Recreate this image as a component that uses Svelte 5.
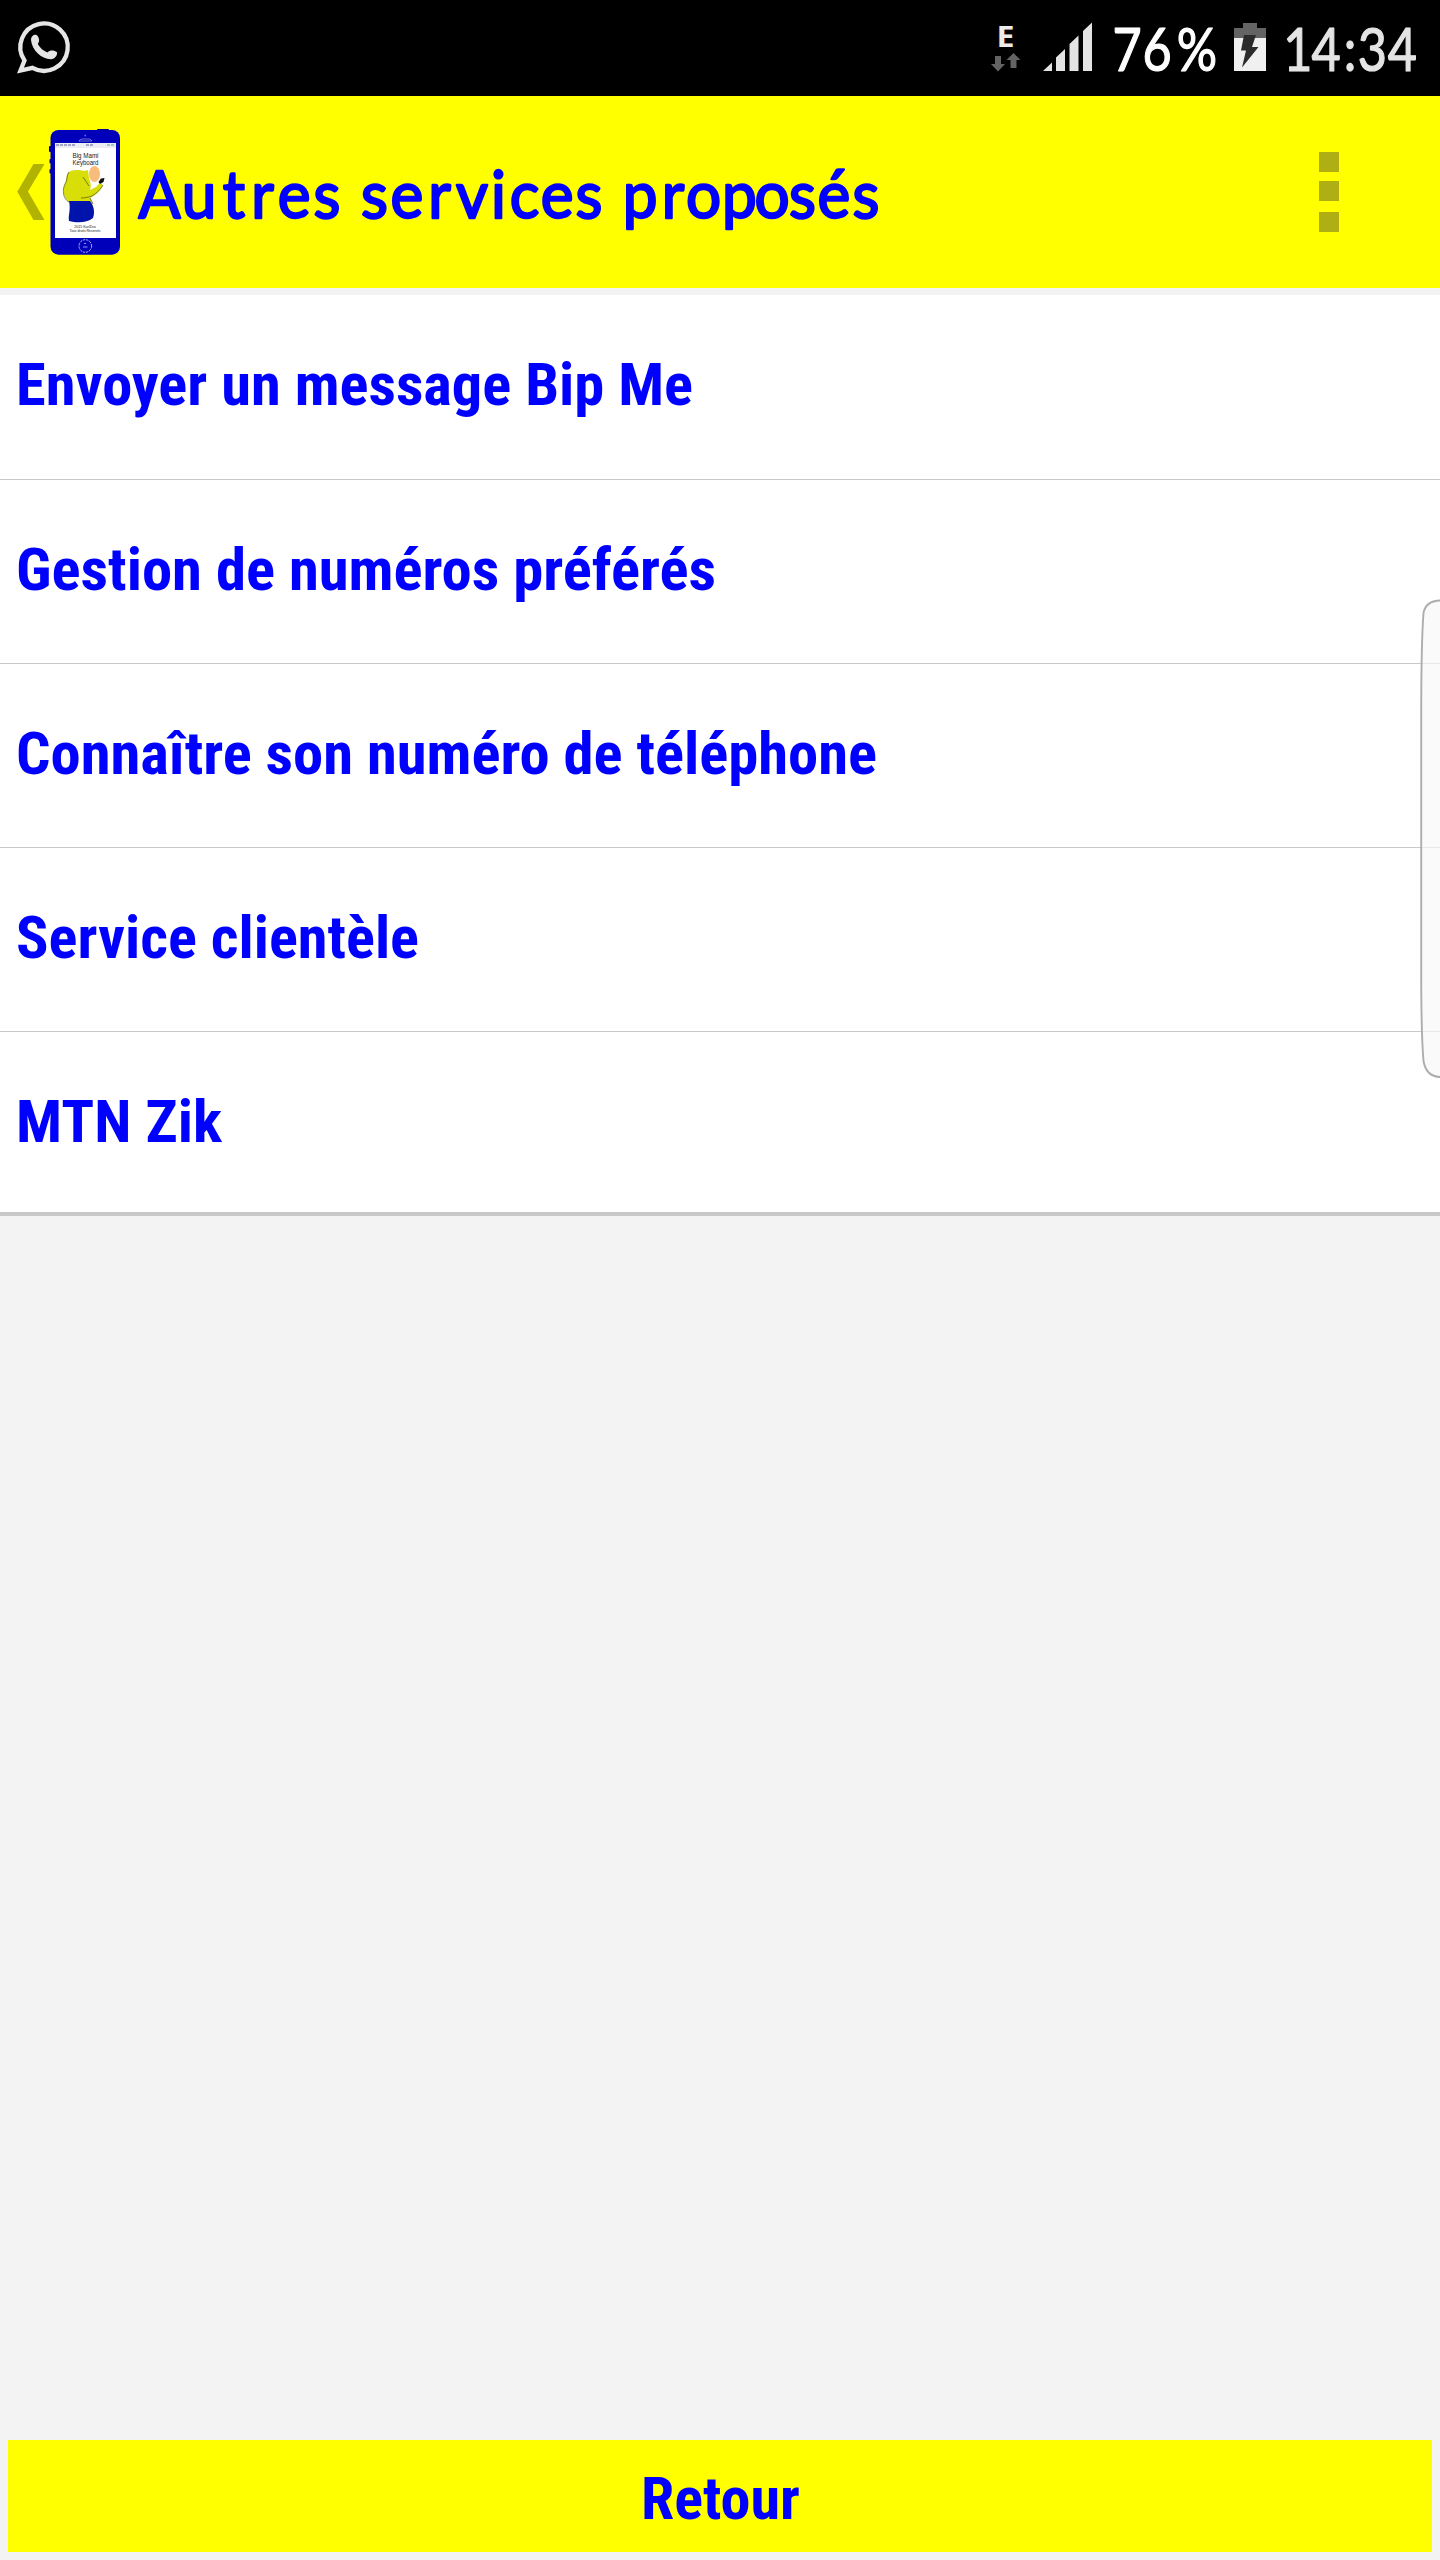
<script lang="ts">
  const services = [
    { label: 'Envoyer un message Bip Me', width: 677 },
    { label: 'Gestion de numéros préférés', width: 700 },
    { label: 'Connaître son numéro de téléphone', width: 861 },
    { label: 'Service clientèle', width: 403 },
    { label: 'MTN Zik', width: 206 },
  ];

  // Letters are centred one by one: the title is loosely spaced
  const title = [
    { word: 'Autres', centers: [159.5, 199, 234, 262.5, 294, 327] },
    { word: 'services', centers: [374.5, 407, 439.5, 472, 498.5, 524.5, 557, 589] },
    { word: 'proposés', centers: [640, 673, 703.5, 739.5, 772, 802.5, 834, 866] },
  ];

  const battery = [1127, 1157, 1197];
  const clock = [1298, 1326, 1350, 1372.5, 1402.5];

  const TITLE_SCALE = 0.94;
  const DIGIT_SCALE = 0.84;

  function place(centers: number[], scale: number) {
    return centers.map((c) => (c / scale).toFixed(1)).join(' ');
  }
</script>

<div class="screen">
  <header class="status-bar">
    <svg width="100" height="96" viewBox="0 0 100 96">
      <path d="M24.500 60.500A23.700 23.700 0 1 1 32.500 67.800L20.500 70.500Z" fill="none" stroke="#e6e6e6" stroke-width="4.300" />
      <path d="M32.500 36C34 34.300 37 34.500 38 36.500C39.500 39.500 39.500 41.500 37.800 44C40 48 43.500 51 47.500 52.500C50 50 54 50 57 52.300C57.500 55.500 55 59 51 59.200C41 59 32 50 31 40C31 38.300 31.500 37 32.500 36Z" fill="#e6e6e6" />
    </svg>
    <div class="status-icons">
      <svg width="48" height="96" viewBox="988 0 48 96">
        <text class="network" x="996.5" y="47" textLength="18" lengthAdjust="spacingAndGlyphs">E</text>
        <path d="M995 56h6v8h4l-7 7.500-7-7.500h4z M1010.500 68h6v-8h4l-7-7-7 7h4z" fill="#636363" />
      </svg>
      <svg width="68" height="96" viewBox="1036 0 68 96">
        <path d="M1043 71L1052 62.500V71Z M1056 71V57.500L1065 49V71Z M1069.500 71V44L1078.500 35.500V71Z M1083 71V31L1092 22.500V71Z" fill="#e4e4e4" />
      </svg>
      <svg width="122" height="96" viewBox="1104 0 122 96">
        <text class="digits bright" transform="scale({DIGIT_SCALE} 1)" x={place(battery, DIGIT_SCALE)} y="71">76%</text>
      </svg>
      <svg width="54" height="96" viewBox="1226 0 54 96">
        <path d="M1243 23h14v5h9v10h-32V28h9z" fill="#646464" />
        <path d="M1234 38h32v33h-32z" fill="#f0f0f0" />
        <path d="M1244 35h12l-4 12h6.500L1242 67.500l4-17h-5z" fill="#2b2b2b" />
      </svg>
      <svg width="160" height="96" viewBox="1280 0 160 96">
        <text class="digits" transform="scale({DIGIT_SCALE} 1)" x={place(clock, DIGIT_SCALE)} y="71">14:34</text>
      </svg>
    </div>
  </header>

  <nav class="action-bar">
    <svg width="130" height="192" viewBox="0 96 130 192">
      <path d="M33.500 164H44.500L28 191.500L44.500 220H33.500L17.300 191.700Z" fill="#b2b200" />
      <rect x="49" y="146" width="4" height="6" rx="1" fill="#00008c" />
      <rect x="49.500" y="159" width="3" height="4.500" rx="1" fill="#00008c" />
      <rect x="49.500" y="169" width="3" height="4.500" rx="1" fill="#00008c" />
      <rect x="97" y="129" width="12" height="4" rx="1" fill="#00008c" />
      <rect x="50.500" y="130" width="69.500" height="124.700" rx="8" fill="#0000ba" />
      <path d="M79 141q1-2 3-2h7q2 0 3 2z" fill="none" stroke="#9898e8" stroke-width="0.7" />
      <circle cx="85.300" cy="135.500" r="0.900" fill="#6060d8" />
      <rect x="55" y="143" width="61" height="95" fill="#fff" />
      <rect x="55" y="143" width="61" height="5" fill="#ececf4" />
      <path d="M56 145h20M86 145h8" stroke="#8c8cb8" stroke-width="1.300" stroke-dasharray="3 1" />
      <path d="M107 145h8" stroke="#7cc89c" stroke-width="1.500" stroke-dasharray="3 1" />
      <text class="app-name" x="85.500" y="158" textLength="26" lengthAdjust="spacingAndGlyphs">Big Mami</text>
      <text class="app-name" x="85.500" y="164.500" textLength="26" lengthAdjust="spacingAndGlyphs">Keyboard</text>
      <path d="M68 173C72 169 80 170 84 171L88 170L89 178C90 182 92 185 90 190L96 187L100 183L103 185C100 191 96 195 90 198C92 200 92.500 203 92.500 207L69 202C64 198 62 190 65 184C67 180 66 175 68 173Z" fill="#d8de08" />
      <path d="M69 172C66 176 68 180 65 184C62 190 63 199 69 202M83 177L89 186M81 198C85 198 89 197 92 196C97 193 101 189 103 185M90 198L93 204" fill="none" stroke="#55551c" stroke-width="0.700" />
      <ellipse cx="94.500" cy="174" rx="5.500" ry="8" fill="#f8bd7c" />
      <path d="M98.500 182L101 178.500L104.500 178L103.500 182L100 184Z" fill="#111" />
      <path d="M69 201H90C94 206 95 212 93 218C87 223 77 223 69 221C68 215 71 210 69 201Z" fill="#0014ac" />
      <text class="credit" x="85" y="228">2015 KarlZeo</text>
      <text class="credit" x="85" y="232.300" textLength="31" lengthAdjust="spacingAndGlyphs">Tous droits Réservés</text>
      <circle cx="85.300" cy="246" r="6.300" fill="none" stroke="#b8b8f4" stroke-width="0.900" stroke-dasharray="2.500 0.800" />
      <path d="M83 247h4.500M84 243.500h2" stroke="#b8b8f4" stroke-width="0.800" />
    </svg>
    <svg class="title" width="800" height="192" viewBox="130 96 800 192">
      {#each title as { word, centers }}
        <text transform="scale({TITLE_SCALE} 1)" x={place(centers, TITLE_SCALE)} y="218">{word}</text>
      {/each}
    </svg>
    <button class="overflow" aria-label="Plus d'options">
      <svg width="20" height="80" viewBox="0 0 20 80">
        <path d="M0 0h20v20H0z M0 29h20v20H0z M0 60h20v20H0z" fill="#afaf14" />
      </svg>
    </button>
  </nav>

  <ul class="services">
    {#each services as { label, width }}
      <li>
        <svg width="1000" height="84">
          <text class="label" x="0" y="66" textLength={width} lengthAdjust="spacingAndGlyphs">{label}</text>
        </svg>
      </li>
    {/each}
  </ul>

  <button class="back">
    <svg width="160" height="80">
      <text class="label" x="1" y="63" textLength="159" lengthAdjust="spacingAndGlyphs">Retour</text>
    </svg>
  </button>

  <svg class="edge-panel" width="20" height="480" viewBox="0 0 20 480">
    <path d="M21 1.500C10 1.500 5 6 3.500 14C1.500 40 1.200 80 1.200 120V370C1.200 410 1.500 440 3.500 462C5 471 10 478 21 478" fill="#f8f8f8" fill-opacity="0.650" stroke="#adadad" stroke-width="1.900" />
  </svg>
</div>

<style>
  :global(body) {
    margin: 0;
    background: #f3f3f3;
  }

  .screen {
    position: relative;
    display: flex;
    flex-direction: column;
    width: 1440px;
    height: 2560px;
    overflow: hidden;
    background: #f3f3f3;
    font-family: Roboto, sans-serif;
  }

  svg {
    display: block;
    flex: none;
  }

  .status-bar {
    display: flex;
    justify-content: space-between;
    height: 96px;
    background: #000;
  }

  .status-icons {
    display: flex;
  }

  .network {
    font: 700 29px 'Open Sans', sans-serif;
    fill: #ececec;
  }

  .digits {
    font: 400 60px Lato, sans-serif;
    text-anchor: middle;
    fill: #e4e4e4;
    stroke: #e4e4e4;
    stroke-width: 1.2;
    stroke-linejoin: round;
  }

  .digits.bright {
    fill: #fff;
    stroke: #fff;
  }

  .action-bar {
    display: flex;
    align-items: center;
    height: 192px;
    background: #ff0;
  }

  .title text {
    font: 400 66px Lato, sans-serif;
    text-anchor: middle;
    fill: #00f;
    stroke: #00f;
    stroke-width: 2.4;
    stroke-linejoin: round;
  }

  .app-name {
    font: 400 6.4px 'Liberation Sans', sans-serif;
    text-anchor: middle;
    fill: #222;
  }

  .credit {
    font: 400 3.6px 'Liberation Sans', sans-serif;
    text-anchor: middle;
    fill: #222;
  }

  button {
    border: 0;
    padding: 0;
    cursor: pointer;
  }

  .overflow {
    margin-left: auto;
    margin-right: 101px;
    background: none;
  }

  .services {
    list-style: none;
    margin: 7px 0 0;
    padding: 0;
    background: #fff;
    border-bottom: 4px solid #c8c8c8;
  }

  .services li {
    display: flex;
    align-items: center;
    box-sizing: border-box;
    height: 184px;
    padding: 0 0 12px 16px;
    border-bottom: 1px solid #c8c8c8;
  }

  .services li:first-child {
    height: 185px;
  }

  .services li:last-child {
    height: 180px;
    padding-bottom: 9px;
    border-bottom: 0;
  }

  .label {
    font-family: 'Roboto Condensed', Roboto, sans-serif;
    font-size: 60px;
    font-weight: 700;
    font-stretch: condensed;
    fill: #00f;
  }

  .back {
    display: flex;
    align-items: center;
    justify-content: center;
    height: 112px;
    margin: auto 8px 8px;
    background: #ff0;
  }

  .edge-panel {
    position: absolute;
    right: 0;
    top: 599px;
  }
</style>
